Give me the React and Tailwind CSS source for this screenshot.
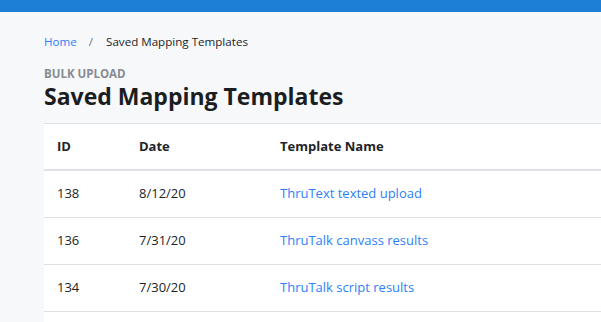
const rows = [
  { id: 138, date: '8/12/20', name: 'ThruText texted upload' },
  { id: 136, date: '7/31/20', name: 'ThruTalk canvass results' },
  { id: 134, date: '7/30/20', name: 'ThruTalk script results' },
]

const App = () => {
  return (
    <div className="flex h-screen flex-col overflow-hidden bg-[#f7f8fa] font-['Open_Sans',sans-serif] text-[#212529]">
      <div className="h-3 shrink-0 bg-[#1e7fd6]" />
      <div className="flex flex-1 flex-col pl-11">
        {/* breadcrumb */}
        <nav className="flex items-center pt-[20px] text-[11.6px] leading-5">
          <a href="#" className="text-[#2d7ff9]">Home</a>
          <span className="pl-[12px] pr-[13px] text-[#6c757d]">/</span>
          <span>Saved Mapping Templates</span>
        </nav>

        <div className="mt-[14px] text-[11.5px] font-bold uppercase leading-4 text-[#888c91]">Bulk Upload</div>
        <h1 className="text-[23px] font-bold leading-7 text-[#1b1e21]">Saved Mapping Templates</h1>

        <div className="mt-[13px] flex-1 border-t border-[#dee2e6] bg-white">
          <table className="w-full text-[13px]">
            <thead>
              <tr className="border-b-2 border-[#dee2e6] text-left">
                <th className="h-[46px] w-[82px] pl-[13px] font-bold">ID</th>
                <th className="w-[141px] pl-[13px] font-bold">Date</th>
                <th className="pl-[13px] font-bold">Template Name</th>
              </tr>
            </thead>
            <tbody>
              {rows.map((r) => (
                <tr key={r.id} className="border-b border-[#dee2e6]">
                  <td className="h-[47px] pl-[13px]">{r.id}</td>
                  <td className="pl-[13px]">{r.date}</td>
                  <td className="pl-[13px]">
                    <a href="#" className="text-[#2d7ff9]">{r.name}</a>
                  </td>
                </tr>
              ))}
            </tbody>
          </table>
        </div>
      </div>
    </div>
  )
}

export default App
